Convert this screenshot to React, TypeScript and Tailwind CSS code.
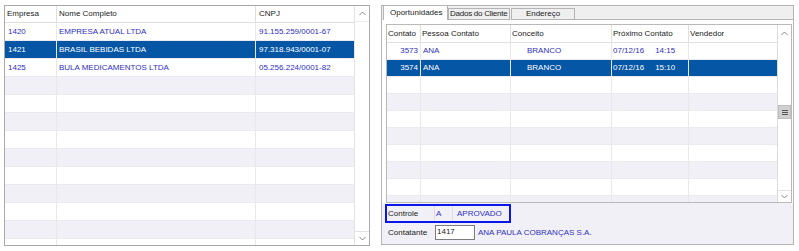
import React from "react";

const FONT = { fontFamily: '"Liberation Sans", Arial, sans-serif' };

function Up() {
  return (
    <svg width="7" height="5" viewBox="0 0 7 5">
      <polyline points="0.5,4 3.5,1 6.5,4" fill="none" stroke="#8a8a8a" strokeWidth="1" />
    </svg>
  );
}
function Down() {
  return (
    <svg width="7" height="5" viewBox="0 0 7 5">
      <polyline points="0.5,1 3.5,4 6.5,1" fill="none" stroke="#8a8a8a" strokeWidth="1" />
    </svg>
  );
}

const leftRows = [
  { e: "1420", n: "EMPRESA ATUAL LTDA", c: "91.155.259/0001-67", sel: false },
  { e: "1421", n: "BRASIL BEBIDAS LTDA", c: "97.318.943/0001-07", sel: true },
  { e: "1425", n: "BULA MEDICAMENTOS LTDA", c: "05.256.224/0001-82", sel: false },
];

const rightRows = [
  { c: "3573", p: "ANA", k: "BRANCO", d: "07/12/16", h: "14:15", sel: false },
  { c: "3574", p: "ANA", k: "BRANCO", d: "07/12/16", h: "15:10", sel: true },
];

function rowBg(i: number, sel: boolean) {
  if (sel) return "bg-[#0556a5] text-white";
  return i % 2 === 0 ? "bg-white text-[#3030c4]" : "bg-[#f0f0f6] text-[#3030c4]";
}

function LeftPanel() {
  const rows = Array.from({ length: 13 }, (_, i) => leftRows[i] ?? null);
  return (
    <div className="ml-[4px] mt-[5px] w-[366px] h-[241px] border border-[#a9a9a9] flex bg-white whitespace-nowrap">
      <div className="flex-1 flex flex-col overflow-hidden">
        <div className="flex h-[17px] shrink-0 border-b border-[#dedede] bg-white text-[#222] text-[8px] leading-none">
          <div className="w-[52px] border-r border-[#dedede] flex items-center pl-[2px]">Empresa</div>
          <div className="w-[199px] border-r border-[#dedede] flex items-center pl-[2px]">Nome Completo</div>
          <div className="w-[98px] flex items-center pl-[3px]">CNPJ</div>
        </div>
        {rows.map((r, i) => (
          <div
            key={i}
            className={`flex h-[18px] shrink-0 border-b border-[#eaeaf0] text-[8px] leading-none ${rowBg(i, r?.sel ?? false)}`}
          >
            <div className="w-[52px] border-r border-[#e8e8e8] flex items-center pl-[3px]">{r?.e}</div>
            <div className="w-[199px] border-r border-[#e8e8e8] flex items-center pl-[2px]">{r?.n}</div>
            <div className="w-[98px] flex items-center pl-[3px]">{r?.c}</div>
          </div>
        ))}
      </div>
      <div className="w-[15px] border-l border-[#e2e2e2] bg-white flex flex-col justify-between">
        <div className="h-[16px] flex items-center justify-center border-b border-[#ececec]">
          <Up />
        </div>
        <div className="h-[14px] flex items-center justify-center border-t border-[#e2e2e2]">
          <Down />
        </div>
      </div>
    </div>
  );
}

function RightGrid() {
  const rows = Array.from({ length: 10 }, (_, i) => rightRows[i] ?? null);
  return (
    <div className="w-[406px] h-[179px] border border-[#b9b9b9] flex bg-white">
      <div className="flex-1 flex flex-col overflow-hidden">
        <div className="flex h-[18px] shrink-0 border-b border-[#e0e0e0] text-[#222] text-[8px] leading-none">
          <div className="w-[34px] border-r border-[#dedede] flex items-center pl-[1px]">Contato</div>
          <div className="w-[90px] border-r border-[#dedede] flex items-center pl-[1px]">Pessoa Contato</div>
          <div className="w-[101px] border-r border-[#dedede] flex items-center pl-[1px]">Conceito</div>
          <div className="w-[77px] border-r border-[#dedede] flex items-center pl-[1px]">Próximo Contato</div>
          <div className="w-[88px] flex items-center pl-[1px]">Vendedor</div>
        </div>
        {rows.map((r, i) => (
          <div
            key={i}
            className={`flex h-[17px] shrink-0 border-b border-[#eaeaf0] text-[8px] leading-none ${rowBg(i, r?.sel ?? false)}`}
          >
            <div className="w-[34px] border-r border-[#e8e8e8] flex items-center justify-end pr-[2px]">{r?.c}</div>
            <div className="w-[90px] border-r border-[#e8e8e8] flex items-center pl-[2px]">{r?.p}</div>
            <div className="w-[101px] border-r border-[#e8e8e8] flex items-center pl-[16px]">{r?.k}</div>
            <div className="w-[77px] border-r border-[#e8e8e8] flex items-center pl-[1px]">
              {r ? (
                <>
                  <span>{r.d}</span>
                  <span className="ml-[11px]">{r.h}</span>
                </>
              ) : null}
            </div>
            <div className="w-[88px]" />
          </div>
        ))}
      </div>
      <div className="w-[14px] border-l border-[#dcdcdc] bg-white flex flex-col">
        <div className="h-[17px] flex items-center justify-center">
          <Up />
        </div>
        <div className="h-[63px]" />
        <div className="h-[14px] bg-[#d0d0d0] border border-[#bdbdbd] flex flex-col items-center justify-center gap-[1px]">
          <div className="w-[6px] h-px bg-[#555]" />
          <div className="w-[6px] h-px bg-[#555]" />
          <div className="w-[6px] h-px bg-[#555]" />
        </div>
        <div className="flex-1" />
        <div className="h-[12px] flex items-center justify-center border-t border-[#e2e2e2]">
          <Down />
        </div>
      </div>
    </div>
  );
}

function RightPanel() {
  return (
    <div className="ml-[11px] mt-[5px] w-[413px] h-[240px] border border-[#b4b4b4] flex flex-col bg-white whitespace-nowrap">
      <div className="h-[14px] shrink-0 flex items-end bg-[#efefef] text-[8px] leading-none text-[#222]">
        <div className="ml-[1px] w-[65px] h-[14px] bg-white border-l border-r border-[#b4b4b4] flex items-center pl-[6px]">
          Oportunidades
        </div>
        <div className="w-[62px] h-[12px] border border-[#b4b4b4] bg-[#efefef] flex items-center pl-[1px] tracking-[-0.25px]">
          Dados do Cliente
        </div>
        <div className="ml-[1px] w-[64px] h-[12px] border border-[#b4b4b4] bg-[#efefef] flex items-center justify-center">
          Endereço
        </div>
        <div className="flex-1 h-[1px] bg-[#b4b4b4]" />
      </div>
      <div className="bg-white pt-[4px] pl-[4px] pr-[1px] shrink-0">
        <RightGrid />
      </div>
      <div className="flex-1 bg-[#f0f0f6] flex flex-col text-[8px] leading-none">
        <div className="mt-[1px] ml-[3px] w-[126px] h-[19px] border-2 border-[#0a17e8] flex items-center">
          <div className="w-[47px] pl-[1px] text-[#222]">Controle</div>
          <div className="w-[19px] h-full border-l border-r border-[#dcdce4] flex items-center pl-[1px] text-[#3030c4]">A</div>
          <div className="pl-[4px] text-[#3030c4]">APROVADO</div>
        </div>
        <div className="mt-[2px] ml-[6px] flex items-center h-[15px]">
          <div className="w-[47px] text-[#222]">Contatante</div>
          <div className="w-[40px] h-[15px] bg-white border border-[#7d7d7d] pl-[1px] pt-[2px] text-[#222]">1417</div>
          <div className="ml-[3px] text-[#3030c4]">ANA PAULA COBRANÇAS S.A.</div>
        </div>
      </div>
    </div>
  );
}

export default function App() {
  return (
    <div className="flex items-start w-[799px] h-[251px] bg-white overflow-hidden" style={FONT}>
      <LeftPanel />
      <RightPanel />
    </div>
  );
}
